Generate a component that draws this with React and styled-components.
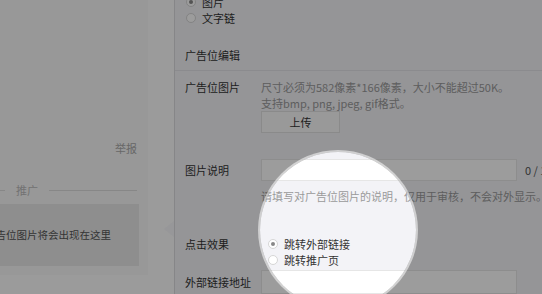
import styled, { createGlobalStyle } from 'styled-components';

const GlobalStyle = createGlobalStyle`
  html, body {
    margin: 0;
    padding: 0;
  }
  body {
    width: 542px;
    height: 294px;
    overflow: hidden;
    font-family: 'Noto Sans CJK SC', 'Noto Sans', sans-serif;
    font-size: 11px;
    line-height: 16px;
    color: #333;
  }
`;

function Radio({ checked, label, indent }) {
    return (
        <RadioOption $indent={indent}>
            <RadioDot $checked={checked} />
            <span>{label}</span>
        </RadioOption>
    );
}

function App() {
    return (
        <>
            <GlobalStyle />
            <Page>
                <PreviewColumn>
                    <PreviewCard>
                        <ReportLink>举报</ReportLink>
                        <Divider>
                            <DividerLine $width="48px" />
                            <DividerText>推广</DividerText>
                            <DividerLine />
                        </Divider>
                        <PreviewBox>广告位图片将会出现在这里</PreviewBox>
                    </PreviewCard>
                </PreviewColumn>

                <FormPanel>
                    <Arrow />
                    <RadioGroup>
                        <Radio checked label="图片" indent={1} />
                        <Radio label="文字链" indent={1} />
                    </RadioGroup>

                    <SectionTitle>广告位编辑</SectionTitle>

                    <FieldRow $gap={8}>
                        <Label $h={16}>广告位图片</Label>
                        <Control>
                            <Hint>尺寸必须为582像素*166像素，大小不能超过50K。</Hint>
                            <Hint>支持bmp, png, jpeg, gif格式。</Hint>
                            <UploadButton>上传</UploadButton>
                        </Control>
                    </FieldRow>

                    <FieldRow $gap={26}>
                        <Label $h={22}>图片说明</Label>
                        <Control>
                            <InputLine>
                                <TextInput $h={22} />
                                <Counter>0 / 100</Counter>
                            </InputLine>
                            <Hint $top={7}>请填写对广告位图片的说明，仅用于审核，不会对外显示。</Hint>
                        </Control>
                    </FieldRow>

                    <FieldRow $gap={32}>
                        <Label $h={16}>点击效果</Label>
                        <Control>
                            <Radio checked label="跳转外部链接" indent={7} />
                            <Radio label="跳转推广页" indent={7} />
                        </Control>
                    </FieldRow>

                    <FieldRow $gap={2}>
                        <Label $h={24}>外部链接地址</Label>
                        <Control>
                            <TextInput $h={24} />
                        </Control>
                    </FieldRow>
                </FormPanel>

                <Spotlight />
            </Page>
        </>
    );
}

export default App;

const Page = styled.div`
    position: relative;
    display: flex;
    width: 542px;
    height: 294px;
    overflow: hidden;
    background-color: #f6f6f6;
`;

const PreviewColumn = styled.div`
    flex: none;
    width: 174px;
    overflow: hidden;
    background-color: #fdfdfd;
`;

const PreviewCard = styled.div`
    display: flex;
    flex-direction: column;
    justify-content: flex-end;
    box-sizing: border-box;
    width: 200px;
    height: 275px;
    margin-left: -52px;
    padding: 0 9px 9px;
    background-color: #f9f9f9;
`;

const ReportLink = styled.div`
    margin-bottom: 26px;
    padding-right: 2px;
    text-align: right;
    color: #aaa;
`;

const Divider = styled.div`
    display: flex;
    align-items: center;
    gap: 11px;
    height: 16px;
    margin-bottom: 6px;
    padding-right: 2px;
`;

const DividerLine = styled.span`
    flex: ${(p) => (p.$width ? 'none' : '1')};
    width: ${(p) => p.$width || 'auto'};
    height: 1px;
    background-color: #ddd;
`;

const DividerText = styled.span`
    color: #bbb;
`;

const PreviewBox = styled.div`
    display: flex;
    align-items: center;
    justify-content: center;
    height: 62px;
    background-color: #e9e9e9;
    color: #555;
    font-size: 10.5px;
`;

const FormPanel = styled.div`
    position: relative;
    flex: 1;
    box-sizing: border-box;
    padding-left: 10px;
    border-left: 1px solid #dcdcde;
    background-color: #f3f3f7;
`;

const Arrow = styled.span`
    position: absolute;
    top: 221px;
    left: -11px;
    width: 0;
    height: 0;
    border-top: 8px solid transparent;
    border-bottom: 8px solid transparent;
    border-right: 10px solid #f7f7fa;
`;

const RadioGroup = styled.div`
    margin-top: -6px;
`;

const RadioOption = styled.label`
    display: flex;
    align-items: center;
    gap: 6px;
    height: 16px;
    padding-left: ${(p) => p.$indent || 0}px;
    color: #333;
`;

const RadioDot = styled.span`
    position: relative;
    flex: none;
    box-sizing: border-box;
    width: 10px;
    height: 10px;
    border: 1px solid #d6d6d6;
    border-radius: 50%;
    background-color: #fff;

    &::after {
        content: '';
        display: ${(p) => (p.$checked ? 'block' : 'none')};
        position: absolute;
        top: 2px;
        left: 2px;
        width: 4px;
        height: 4px;
        border-radius: 50%;
        background-color: #888;
    }
`;

const SectionTitle = styled.div`
    margin-left: -10px;
    padding: 21px 0 7px 10px;
    border-bottom: 1px solid #e4e4e8;
    color: #333;
`;

const FieldRow = styled.div`
    display: flex;
    align-items: flex-start;
    margin-top: ${(p) => p.$gap}px;
`;

const Label = styled.div`
    flex: none;
    width: 76px;
    line-height: ${(p) => p.$h}px;
    color: #333;
`;

const Control = styled.div`
    display: flex;
    flex-direction: column;
    align-items: flex-start;
`;

const Hint = styled.div`
    margin-top: ${(p) => p.$top || 0}px;
    color: #9a9a9a;
    white-space: nowrap;
`;

const UploadButton = styled.button`
    box-sizing: border-box;
    width: 79px;
    height: 22px;
    padding: 0;
    border: 1px solid #e2e2e2;
    background-color: #fbfbfb;
    font-family: inherit;
    font-size: 11px;
    color: #333;
`;

const InputLine = styled.div`
    display: flex;
    align-items: center;
    gap: 8px;
`;

const TextInput = styled.div`
    box-sizing: border-box;
    width: 256px;
    height: ${(p) => p.$h}px;
    border: 1px solid #e6e6e6;
    background-color: #fff;
`;

const Counter = styled.span`
    color: #555;
    white-space: nowrap;
`;

const Spotlight = styled.div`
    position: absolute;
    top: 152px;
    left: 260px;
    width: 156px;
    height: 156px;
    border-radius: 50%;
    box-shadow: 0 0 0 2px rgba(255, 255, 255, 0.55), 0 0 0 1000px rgba(0, 0, 0, 0.39);
    pointer-events: none;
`;
